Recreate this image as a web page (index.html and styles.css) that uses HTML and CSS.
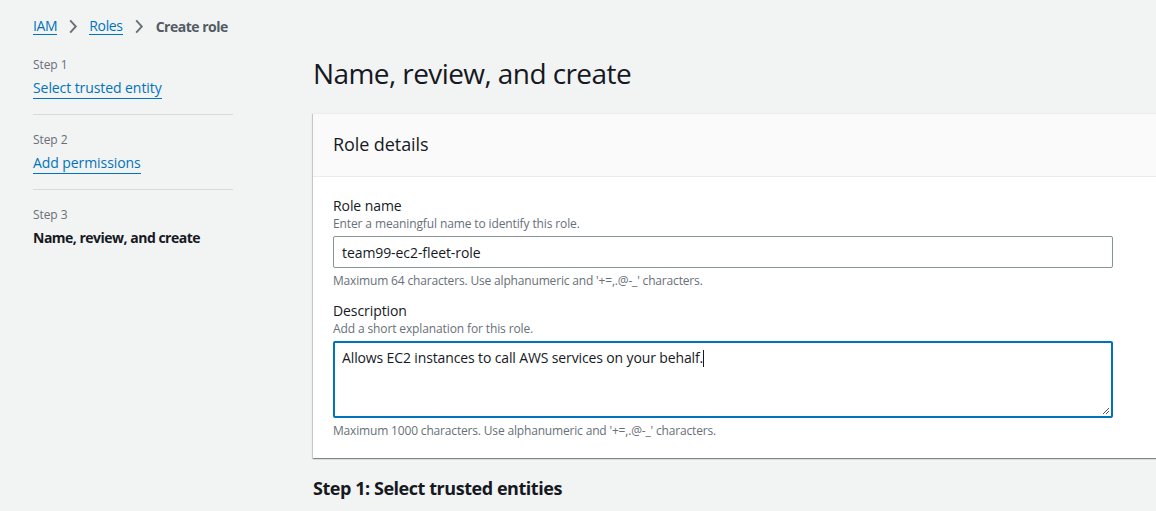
FILE: index.html
```html
<!DOCTYPE html>
<html>
<head>
<meta charset="utf-8">
<link rel="stylesheet" href="styles.css">
</head>
<body>
<div class="page">
  <aside class="side">
    <nav class="crumbs">
      <a class="crumb-link" href="#">IAM</a>
      <svg class="chev" viewBox="0 0 10 16"><path d="M2 1.5l6 6.5-6 6.5" fill="none" stroke="currentColor" stroke-width="2"/></svg>
      <a class="crumb-link" href="#">Roles</a>
      <svg class="chev" viewBox="0 0 10 16"><path d="M2 1.5l6 6.5-6 6.5" fill="none" stroke="currentColor" stroke-width="2"/></svg>
      <span class="crumb-current">Create role</span>
    </nav>
    <ol class="steps">
      <li class="step">
        <div class="step-num">Step 1</div>
        <a class="step-link" href="#">Select trusted entity</a>
      </li>
      <li class="step">
        <div class="step-num">Step 2</div>
        <a class="step-link" href="#">Add permissions</a>
      </li>
      <li class="step">
        <div class="step-num">Step 3</div>
        <div class="step-active">Name, review, and create</div>
      </li>
    </ol>
  </aside>
  <main class="main">
    <h1 class="title">Name, review, and create</h1>
    <section class="card">
      <header class="card-head">Role details</header>
      <div class="card-body">
        <div class="field">
          <div class="label">Role name</div>
          <div class="desc">Enter a meaningful name to identify this role.</div>
          <div class="input">team99-ec2-fleet-role</div>
          <div class="hint">Maximum 64 characters. Use alphanumeric and '+=,.@-_' characters.</div>
        </div>
        <div class="field">
          <div class="label">Description</div>
          <div class="desc">Add a short explanation for this role.</div>
          <div class="textarea">Allows EC2 instances to call AWS services on your behalf.<span class="caret"></span>
            <svg class="grip" viewBox="0 0 10 10"><path d="M9 3L3 9M9 6L6 9" stroke="#555" stroke-width="1"/></svg>
          </div>
          <div class="hint">Maximum 1000 characters. Use alphanumeric and '+=,.@-_' characters.</div>
        </div>
      </div>
    </section>
    <h2 class="section-title">Step 1: Select trusted entities</h2>
  </main>
</div>
</body>
</html>
```

FILE: styles.css
```css
html, body {
  margin: 0;
  padding: 0;
}
body {
  background: #f2f3f3;
  font-family: "Open Sans", "Noto Sans", Arial, sans-serif;
  color: #16191f;
  overflow: hidden;
  width: 1156px;
  height: 511px;
  letter-spacing: -0.08px;
}
a { text-decoration: none; }
.page {
  display: flex;
  padding-left: 33px;
}
.side {
  width: 200px;
  flex: none;
}
.crumbs {
  display: flex;
  align-items: center;
  height: 20px;
  margin-top: 16px;
  font-size: 14px;
  white-space: nowrap;
}
.crumb-link {
  color: #0073bb;
  border-bottom: 1px solid #0073bb;
  line-height: 17px;
  letter-spacing: -0.35px;
}
.chev {
  flex: none;
  width: 10px;
  height: 15px;
  color: #687078;
  margin: 0 11px;
}
.crumb-current {
  color: #545b64;
  font-weight: 700;
  letter-spacing: -0.5px;
  margin-left: 1px;
}
.steps {
  list-style: none;
  margin: 18px 0 0;
  padding: 0;
}
.step {
  padding: 1px 0 15px;
  margin-bottom: 14px;
  border-bottom: 1px solid #d5dbdb;
}
.step:last-child { border-bottom: none; }
.step-num {
  font-size: 12px;
  color: #687078;
  line-height: 20px;
  margin-bottom: 3px;
}
.step-link {
  display: block;
  width: fit-content;
  font-size: 14px;
  color: #0073bb;
  line-height: 20px;
  border-bottom: 1px solid #0073bb;
}
.step-active {
  font-size: 14px;
  font-weight: 700;
  letter-spacing: -0.5px;
  color: #16191f;
  line-height: 19px;
}
.main {
  margin-left: 80px;
  flex: none;
  width: 900px;
}
.title {
  font-size: 28px;
  font-weight: 400;
  letter-spacing: -0.58px;
  margin: 55px 0 22px;
  line-height: 36px;
}
.card {
  background: #fff;
  width: 900px;
  box-shadow: 0 1px 1px 0 rgba(0,28,36,.3), 1px 1px 1px 0 rgba(0,28,36,.15), -1px 1px 1px 0 rgba(0,28,36,.15);
  border-top: 1px solid #eaeded;
}
.card-head {
  background: #fafafa;
  border-bottom: 1px solid #eaeded;
  height: 60px;
  padding-bottom: 2px;
  display: flex;
  align-items: center;
  padding-left: 20px;
  font-size: 18px;
}
.card-body {
  padding: 19px 20px 19px;
}
.field + .field { margin-top: 12px; }
.label {
  font-size: 14px;
  line-height: 20px;
}
.desc {
  font-size: 12px;
  color: #687078;
  line-height: 16px;
  letter-spacing: -0.12px;
  margin-bottom: 4px;
}
.input {
  width: 780px;
  box-sizing: border-box;
  height: 32px;
  border: 1px solid #879596;
  border-radius: 2px;
  font-size: 14px;
  padding: 0 8px;
  display: flex;
  align-items: center;
}
.textarea {
  position: relative;
  width: 780px;
  box-sizing: border-box;
  height: 77px;
  border: 2px solid #0073bb;
  border-radius: 2px;
  font-size: 14px;
  letter-spacing: -0.13px;
  padding: 4px 7px;
  line-height: 22px;
}
.caret {
  display: inline-block;
  width: 1px;
  height: 17px;
  background: #16191f;
  vertical-align: -4px;
}
.grip {
  position: absolute;
  right: 1px;
  bottom: 1px;
  width: 10px;
  height: 10px;
}
.hint {
  font-size: 12px;
  color: #687078;
  line-height: 16px;
  letter-spacing: -0.17px;
  margin-top: 5px;
}
.section-title {
  font-size: 18px;
  font-weight: 700;
  letter-spacing: -0.45px;
  margin: 18px 0 0;
  line-height: 24px;
}
```
